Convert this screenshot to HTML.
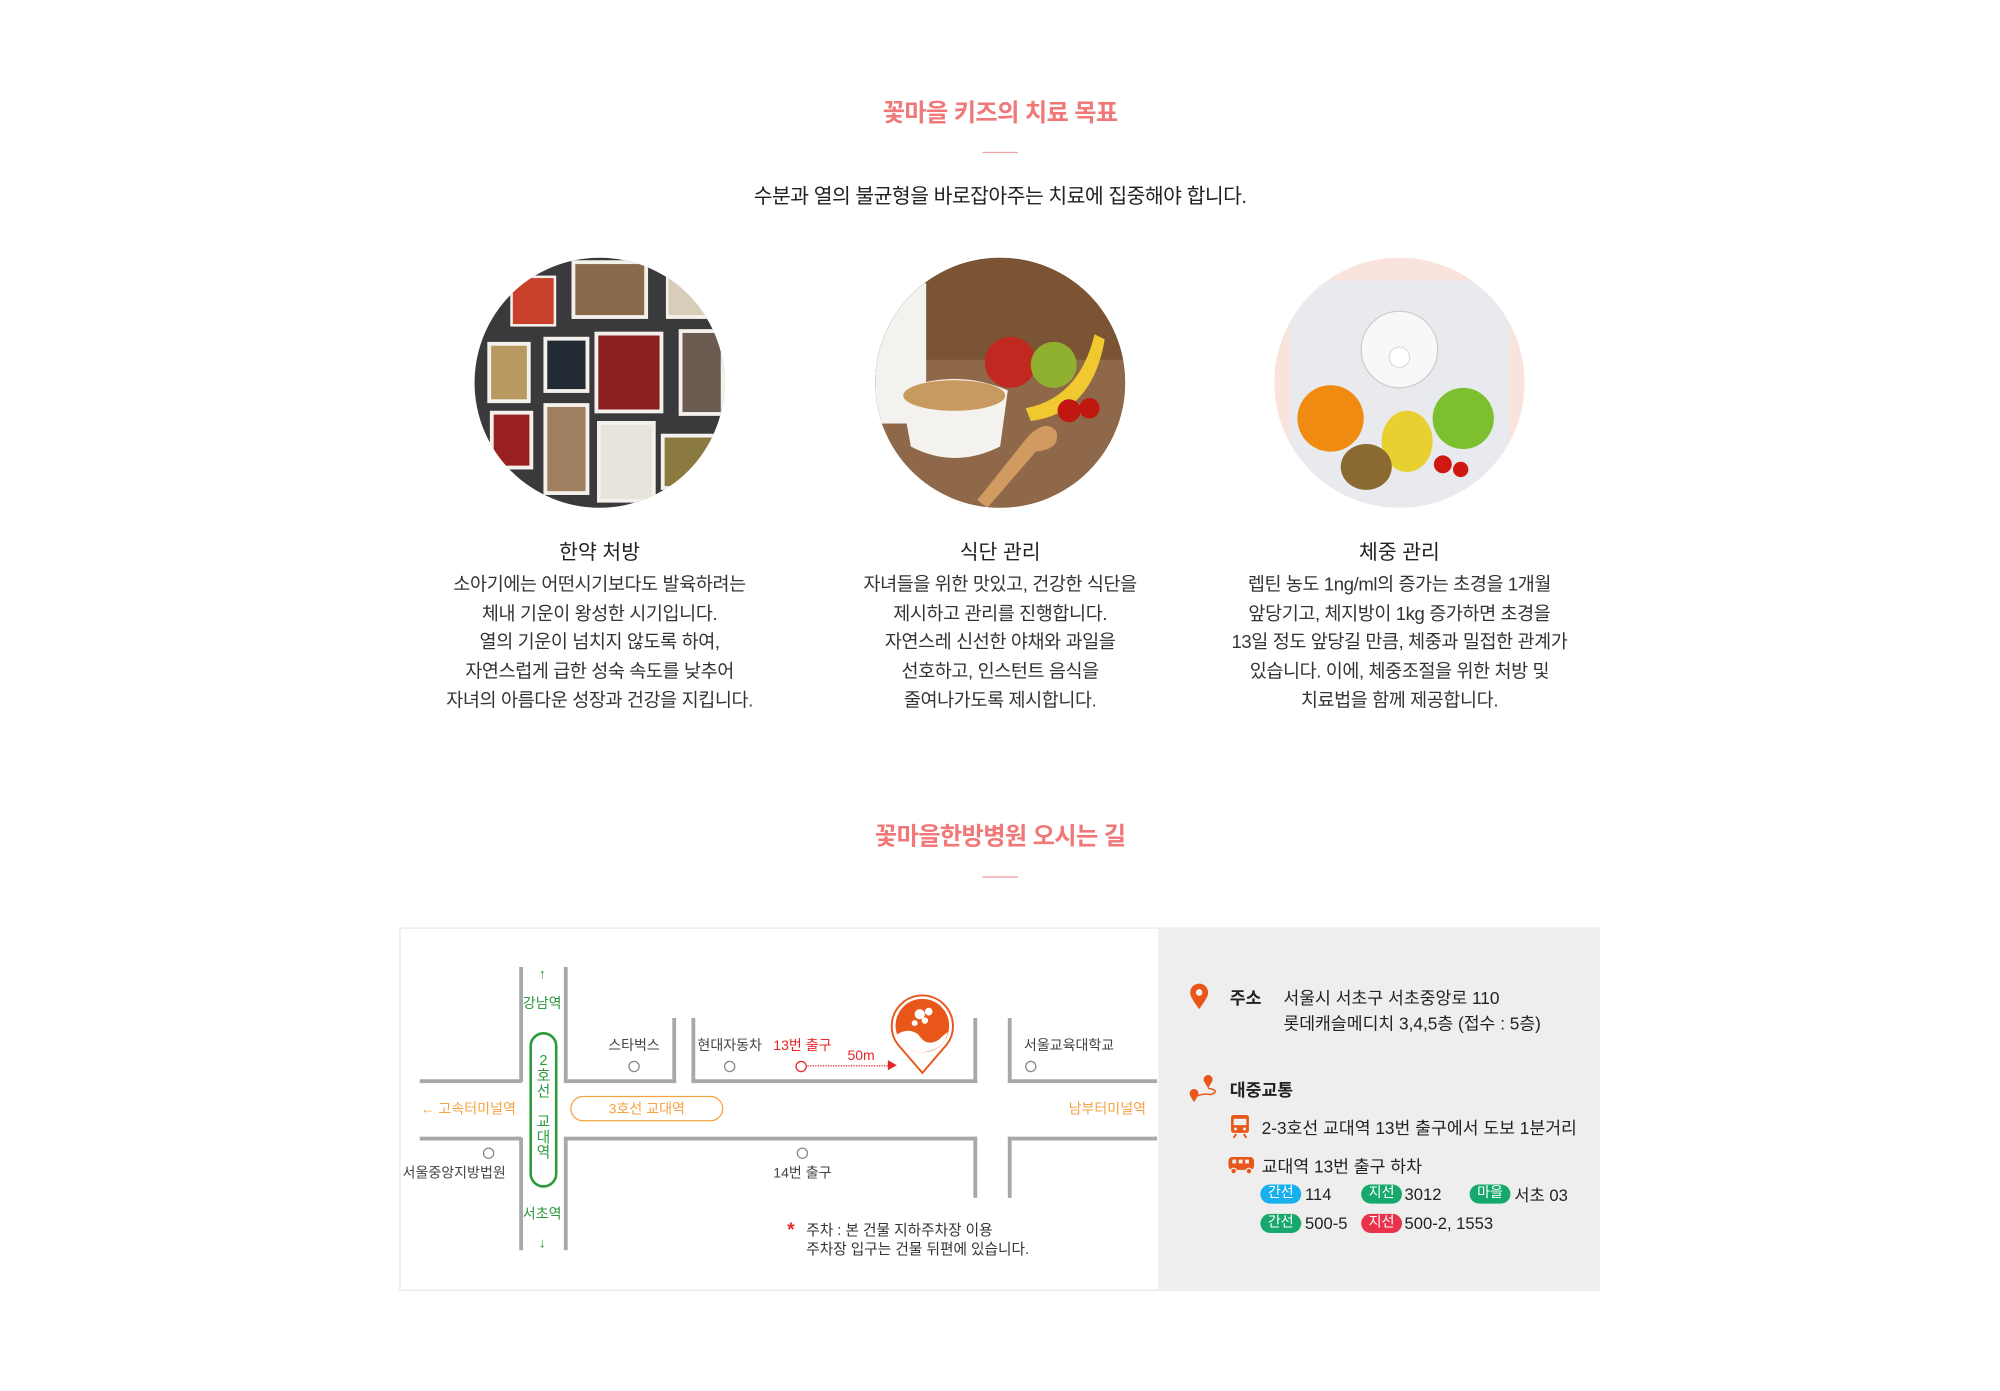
<!DOCTYPE html>
<html><head><meta charset="utf-8">
<style>
html,body{margin:0;padding:0;background:#fff;width:2000px;height:1390px;overflow:hidden}
#w{position:absolute;left:0;top:0;width:1568px;height:1090px;transform:scale(1.2757);transform-origin:0 0;font-family:"Liberation Sans","Noto Sans CJK KR",sans-serif;color:#333}
.a{position:absolute;white-space:nowrap}
.c{transform:translateX(-50%)}
.t{font-size:19px;color:#f07878;font-weight:bold;letter-spacing:-0.5px}
.ln{position:absolute;height:1px;width:28px;background:#f0a0a0}
.circ{position:absolute;width:196px;height:196px;border-radius:50%;top:202px;overflow:hidden}
.h{font-size:16px;color:#222;top:419px}
.p{font-size:14.5px;line-height:22.7px;text-align:center;top:448px;color:#333;letter-spacing:-0.3px}
.r{position:absolute;background:#a8a8a8}
.m{font-size:11px;color:#444;position:absolute;white-space:nowrap;transform:translate(-50%,-50%)}
.o{position:absolute;width:7px;height:7px;border:1.3px solid #888;border-radius:50%;transform:translate(-50%,-50%)}
.g{color:#2a9a3a}.or{color:#f4a340}
.pt{font-size:13.5px;color:#222;position:absolute;white-space:nowrap;transform:translateY(-50%)}
.b{position:absolute;width:32px;height:15px;border-radius:8px;color:#fff;font-size:11px;text-align:center;line-height:15px;transform:translateY(-50%)}
</style></head><body><div id="w">
<div class="a c t" style="left:784px;top:74px">꽃마을 키즈의 치료 목표</div>
<div class="ln" style="left:770px;top:119px"></div>
<div class="a c" style="left:784px;top:140px;font-size:16px;color:#222;letter-spacing:-0.4px">수분과 열의 불균형을 바로잡아주는 치료에 집중해야 합니다.</div>

<div class="circ" style="left:372px;background:#3a3a3c">
<svg width="196" height="196"><g fill="#f4f1ec">
<rect x="28" y="14" width="36" height="40"/><rect x="76" y="2" width="60" height="46"/><rect x="150" y="8" width="40" height="40"/>
<rect x="10" y="66" width="34" height="48"/><rect x="54" y="62" width="36" height="44"/><rect x="94" y="58" width="54" height="64"/><rect x="160" y="56" width="36" height="68"/>
<rect x="12" y="120" width="34" height="46"/><rect x="54" y="114" width="36" height="72"/><rect x="96" y="128" width="46" height="64"/><rect x="146" y="138" width="46" height="44"/></g>
<g><rect x="30" y="16" width="32" height="36" fill="#c8402a"/><rect x="79" y="5" width="54" height="40" fill="#8a6a4a"/><rect x="152" y="11" width="36" height="34" fill="#d8cdb8"/>
<rect x="13" y="69" width="28" height="42" fill="#b89a60"/><rect x="57" y="65" width="30" height="38" fill="#222a33"/><rect x="97" y="61" width="48" height="58" fill="#8a2020"/><rect x="163" y="59" width="30" height="62" fill="#6a5a50"/>
<rect x="15" y="123" width="28" height="40" fill="#9a2020"/><rect x="57" y="117" width="30" height="66" fill="#a08060"/><rect x="99" y="131" width="40" height="58" fill="#e8e4dc"/><rect x="149" y="141" width="40" height="38" fill="#8a7a40"/></g></svg></div>

<div class="circ" style="left:686px;background:#8a6444">
<svg width="196" height="196"><rect width="196" height="196" fill="#8e6848"/><rect x="0" y="0" width="196" height="80" fill="#7a5434"/><rect x="0" y="20" width="40" height="110" fill="#f2f2ee"/>
<path d="M20 104 Q62 86 104 104 L98 148 Q62 166 28 148Z" fill="#f4f2ee"/><ellipse cx="62" cy="108" rx="40" ry="12" fill="#c89a60"/>
<circle cx="106" cy="82" r="20" fill="#c02820"/><circle cx="140" cy="84" r="18" fill="#90b030"/><path d="M118 118 Q160 110 172 60 L180 64 Q170 122 122 128Z" fill="#f0c830"/>
<circle cx="152" cy="120" r="9" fill="#c01810"/><circle cx="168" cy="118" r="8" fill="#c01810"/><path d="M80 190 L120 140 Q134 126 142 136 Q146 150 126 152 L88 196Z" fill="#d09a60"/></svg></div>

<div class="circ" style="left:999px;background:#fbe6e0">
<svg width="196" height="196"><rect x="0" y="0" width="196" height="196" fill="#f9e3dc"/><rect x="12" y="18" width="172" height="178" fill="#e8eaee"/>
<circle cx="98" cy="72" r="30" fill="#f8f8f8" stroke="#ccc"/><circle cx="98" cy="78" r="8" fill="#fff" stroke="#ddd"/>
<circle cx="44" cy="126" r="26" fill="#f08a10"/><circle cx="148" cy="126" r="24" fill="#7cc030"/><ellipse cx="104" cy="144" rx="20" ry="24" fill="#e8d030"/><ellipse cx="72" cy="164" rx="20" ry="18" fill="#8a6a30"/><circle cx="132" cy="162" r="7" fill="#d01810"/><circle cx="146" cy="166" r="6" fill="#d01810"/></svg></div>

<div class="a c h" style="left:470px">한약 처방</div>
<div class="a c h" style="left:784px">식단 관리</div>
<div class="a c h" style="left:1097px">체중 관리</div>
<div class="a c p" style="left:470px">소아기에는 어떤시기보다도 발육하려는<br>체내 기운이 왕성한 시기입니다.<br>열의 기운이 넘치지 않도록 하여,<br>자연스럽게 급한 성숙 속도를 낮추어<br>자녀의 아름다운 성장과 건강을 지킵니다.</div>
<div class="a c p" style="left:784px">자녀들을 위한 맛있고, 건강한 식단을<br>제시하고 관리를 진행합니다.<br>자연스레 신선한 야채와 과일을<br>선호하고, 인스턴트 음식을<br>줄여나가도록 제시합니다.</div>
<div class="a c p" style="left:1097px">렙틴 농도 1ng/ml의 증가는 초경을 1개월<br>앞당기고, 체지방이 1kg 증가하면 초경을<br>13일 정도 앞당길 만큼, 체중과 밀접한 관계가<br>있습니다. 이에, 체중조절을 위한 처방 및<br>치료법을 함께 제공합니다.</div>

<div class="a c t" style="left:784px;top:641px">꽃마을한방병원 오시는 길</div>
<div class="ln" style="left:770px;top:687px"></div>

<div style="position:absolute;left:313px;top:727px;width:939px;height:283px;border:1px solid #e6e6e6;background:#fff"></div>
<div style="position:absolute;left:908px;top:727px;width:346px;height:285px;background:#eeeeee"></div>

<div class="r" style="left:407px;top:758px;width:3px;height:90px"></div>
<div class="r" style="left:442px;top:758px;width:3px;height:90px"></div>
<div class="r" style="left:407px;top:892px;width:3px;height:88px"></div>
<div class="r" style="left:442px;top:892px;width:3px;height:88px"></div>
<div class="r" style="left:329px;top:846px;width:80px;height:3px"></div>
<div class="r" style="left:442px;top:846px;width:88px;height:3px"></div>
<div class="r" style="left:527px;top:798px;width:3px;height:51px"></div>
<div class="r" style="left:542px;top:846px;width:224px;height:3px"></div>
<div class="r" style="left:542px;top:798px;width:3px;height:51px"></div>
<div class="r" style="left:763px;top:798px;width:3px;height:51px"></div>
<div class="r" style="left:790px;top:846px;width:117px;height:3px"></div>
<div class="r" style="left:790px;top:798px;width:3px;height:51px"></div>
<div class="r" style="left:329px;top:891px;width:80px;height:3px"></div>
<div class="r" style="left:442px;top:891px;width:324px;height:3px"></div>
<div class="r" style="left:763px;top:891px;width:3px;height:48px"></div>
<div class="r" style="left:790px;top:891px;width:117px;height:3px"></div>
<div class="r" style="left:790px;top:891px;width:3px;height:48px"></div>

<div style="position:absolute;left:415px;top:809px;width:18px;height:118px;border:2px solid #2a9a3a;border-radius:11px;background:#fff"></div>
<div class="m g" style="left:426px;top:868px;font-size:11.5px;line-height:12px;text-align:center">2<br>호<br>선<br><br>교<br>대<br>역</div>
<div class="m g" style="left:425px;top:764px">↑</div>
<div class="m g" style="left:425px;top:786px">강남역</div>
<div class="m g" style="left:425px;top:951px">서초역</div>
<div class="m g" style="left:425px;top:975px">↓</div>
<div style="position:absolute;left:447px;top:859px;width:118px;height:18px;border:1.5px solid #f4a340;border-radius:10px"></div>
<div class="m or" style="left:507px;top:869px">3호선 교대역</div>
<div class="m or" style="left:367px;top:869px">← 고속터미널역</div>
<div class="m or" style="left:868px;top:869px">남부터미널역</div>
<div class="m" style="left:497px;top:819px">스타벅스</div><div class="o" style="left:497px;top:836px"></div>
<div class="m" style="left:572px;top:819px">현대자동차</div><div class="o" style="left:572px;top:836px"></div>
<div class="m" style="left:629px;top:819px;color:#e8262a">13번 출구</div>
<div class="o" style="left:628px;top:836px;border-color:#e8262a"></div>
<div style="position:absolute;left:633px;top:835px;width:63px;border-top:1.5px dotted #e8262a"></div>
<div style="position:absolute;left:696px;top:831px;width:0;height:0;border-left:7px solid #e8262a;border-top:4px solid transparent;border-bottom:4px solid transparent"></div>
<div class="m" style="left:675px;top:828px;color:#e8262a">50m</div>
<div class="m" style="left:838px;top:819px">서울교육대학교</div><div class="o" style="left:808px;top:836px"></div>
<div class="m" style="left:356px;top:919px">서울중앙지방법원</div><div class="o" style="left:383px;top:904px"></div>
<div class="m" style="left:629px;top:919px">14번 출구</div><div class="o" style="left:629px;top:904px"></div>
<svg style="position:absolute;left:696px;top:779px" width="54" height="64" viewBox="0 0 54 64">
<path d="M27 62 L8 40 A24 24 0 1 1 46 40 Z" fill="#fff" stroke="#e8561a" stroke-width="1.5"/>
<circle cx="27" cy="25" r="21" fill="#e8561a"/>
<path d="M7 32 Q16 26 24 32 Q30 42 40 36 Q44 32 47 30 Q44 44 27 46 Q12 45 7 32Z" fill="#fff"/>
<circle cx="25" cy="16" r="4" fill="#fff"/><circle cx="32" cy="14" r="3" fill="#fff"/><circle cx="29" cy="21" r="2.5" fill="#fff"/><circle cx="21" cy="23" r="2.3" fill="#fff"/></svg>
<div class="a" style="left:617px;top:956px;font-size:15px;color:#e8262a;font-weight:bold">*</div>
<div class="a" style="left:632px;top:958px;font-size:11.5px;color:#333;line-height:15px">주차 : 본 건물 지하주차장 이용<br>주차장 입구는 건물 뒤편에 있습니다.</div>

<svg style="position:absolute;left:932px;top:770px" width="16" height="22" viewBox="0 0 16 22"><path d="M8 21 C3 14 1 11 1 8 A7 7 0 0 1 15 8 C15 11 13 14 8 21Z" fill="#e8561a"/><circle cx="8" cy="8" r="2.6" fill="#eee"/></svg>
<div class="pt" style="left:964px;top:781px;font-weight:bold">주소</div>
<div class="pt" style="left:1006px;top:781px">서울시 서초구 서초중앙로 110</div>
<div class="pt" style="left:1006px;top:801px">롯데캐슬메디치 3,4,5층 (접수 : 5층)</div>
<svg style="position:absolute;left:931px;top:841px" width="26" height="26" viewBox="0 0 26 26"><path d="M5 23 L2 18 A3.5 3.5 0 1 1 8 18Z" fill="#e8561a"/><path d="M16 12 L13 7 A3.5 3.5 0 1 1 19 7Z" fill="#e8561a"/><path d="M8 18 Q12 16 18 17 Q24 15 20 13 L16 12" stroke="#e8561a" fill="none" stroke-width="1.2"/></svg>
<div class="pt" style="left:964px;top:853px;font-weight:bold">대중교통</div>
<svg style="position:absolute;left:964px;top:873px" width="16" height="20" viewBox="0 0 16 20"><rect x="1" y="1" width="14" height="14" rx="2" fill="#e8561a"/><rect x="3" y="4" width="10" height="5" fill="#eee"/><circle cx="4.5" cy="12" r="1.2" fill="#eee"/><circle cx="11.5" cy="12" r="1.2" fill="#eee"/><path d="M3 19 L5 16 M13 19 L11 16" stroke="#e8561a" stroke-width="1.5"/></svg>
<div class="pt" style="left:989px;top:883px">2-3호선 교대역 13번 출구에서 도보 1분거리</div>
<svg style="position:absolute;left:962px;top:906px" width="22" height="15" viewBox="0 0 22 15"><rect x="1" y="1" width="20" height="10" rx="3" fill="#e8561a"/><rect x="4" y="3" width="3" height="3" fill="#eee"/><rect x="9" y="3" width="3" height="3" fill="#eee"/><rect x="14" y="3" width="3" height="3" fill="#eee"/><circle cx="5" cy="12" r="2.2" fill="#e8561a" stroke="#eee"/><circle cx="17" cy="12" r="2.2" fill="#e8561a" stroke="#eee"/></svg>
<div class="pt" style="left:989px;top:913px">교대역 13번 출구 하차</div>
<div class="b" style="left:988px;top:936px;background:#16b0ee">간선</div><div class="pt" style="left:1023px;top:936px;font-size:13px">114</div>
<div class="b" style="left:1067px;top:936px;background:#17a86b">지선</div><div class="pt" style="left:1101px;top:936px;font-size:13px">3012</div>
<div class="b" style="left:1152px;top:936px;background:#17a86b">마을</div><div class="pt" style="left:1187px;top:936px;font-size:13px">서초 03</div>
<div class="b" style="left:988px;top:959px;background:#17a86b">간선</div><div class="pt" style="left:1023px;top:959px;font-size:13px">500-5</div>
<div class="b" style="left:1067px;top:959px;background:#e8334a">지선</div><div class="pt" style="left:1101px;top:959px;font-size:13px">500-2, 1553</div>
</div></body></html>
